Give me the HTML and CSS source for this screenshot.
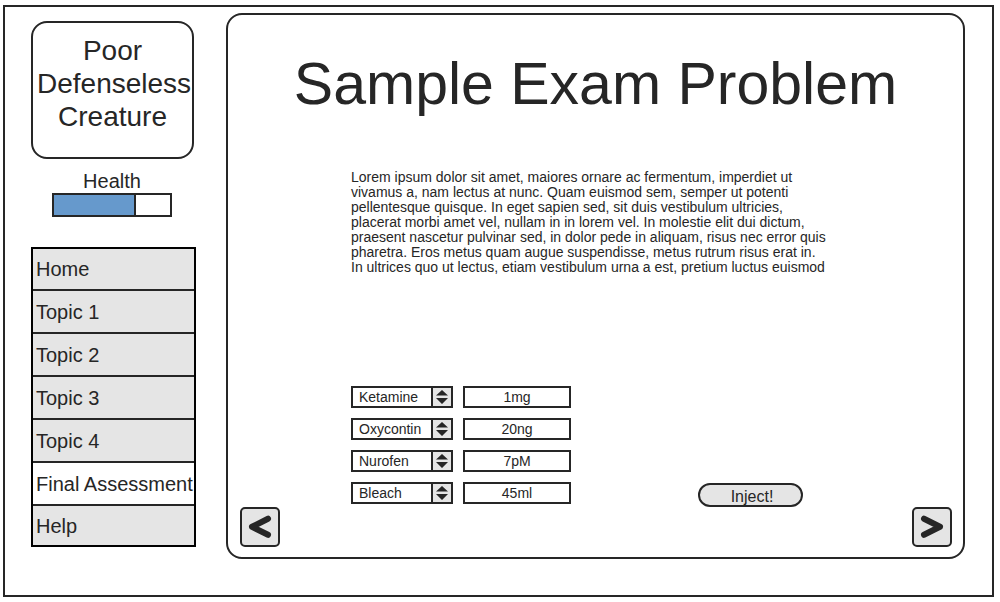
FILE: index.html
```html
<!DOCTYPE html>
<html lang="en">
<head>
<meta charset="utf-8">
<title>Sample Exam Problem</title>
<link rel="stylesheet" href="styles.css">
</head>
<body>
<div class="frame">
  <aside class="sidebar">
    <div class="creature">Poor Defenseless Creature</div>
    <div class="health">
      <label for="health">Health</label>
      <progress id="health" class="health-bar" value="71" max="100"></progress>
    </div>
    <nav class="menu">
      <a href="#home">Home</a>
      <a href="#topic1">Topic 1</a>
      <a href="#topic2">Topic 2</a>
      <a href="#topic3">Topic 3</a>
      <a href="#topic4">Topic 4</a>
      <a href="#final" class="current" aria-current="page">Final Assessment</a>
      <a href="#help">Help</a>
    </nav>
  </aside>
  <main class="panel">
    <h1 class="title">Sample Exam Problem</h1>
    <p class="question">Lorem ipsum dolor sit amet, maiores ornare ac fermentum, imperdiet ut<br>
      vivamus a, nam lectus at nunc. Quam euismod sem, semper ut potenti<br>
      pellentesque quisque. In eget sapien sed, sit duis vestibulum ultricies,<br>
      placerat morbi amet vel, nullam in in lorem vel. In molestie elit dui dictum,<br>
      praesent nascetur pulvinar sed, in dolor pede in aliquam, risus nec error quis<br>
      pharetra. Eros metus quam augue suspendisse, metus rutrum risus erat in.<br>
      In ultrices quo ut lectus, etiam vestibulum urna a est, pretium luctus euismod</p>
    <form class="doses">
      <div class="dose-grid">
        <div class="picker">
          <select aria-label="Drug 1"><option>Ketamine</option></select>
          <span class="arrows"><svg viewBox="0 0 18 18" width="18" height="18"><path d="M9 2l6 5.500H3zM9 16l6-6H3z"/></svg></span>
        </div>
        <input class="dose" type="text" value="1mg" aria-label="Dose 1">
        <div class="picker">
          <select aria-label="Drug 2"><option>Oxycontin</option></select>
          <span class="arrows"><svg viewBox="0 0 18 18" width="18" height="18"><path d="M9 2l6 5.500H3zM9 16l6-6H3z"/></svg></span>
        </div>
        <input class="dose" type="text" value="20ng" aria-label="Dose 2">
        <div class="picker">
          <select aria-label="Drug 3"><option>Nurofen</option></select>
          <span class="arrows"><svg viewBox="0 0 18 18" width="18" height="18"><path d="M9 2l6 5.500H3zM9 16l6-6H3z"/></svg></span>
        </div>
        <input class="dose" type="text" value="7pM" aria-label="Dose 3">
        <div class="picker">
          <select aria-label="Drug 4"><option>Bleach</option></select>
          <span class="arrows"><svg viewBox="0 0 18 18" width="18" height="18"><path d="M9 2l6 5.500H3zM9 16l6-6H3z"/></svg></span>
        </div>
        <input class="dose" type="text" value="45ml" aria-label="Dose 4">
      </div>
      <button type="button" class="inject">Inject!</button>
    </form>
    <div class="pager">
      <button type="button" class="step" aria-label="Previous"><svg viewBox="0 0 36 36" width="36" height="36"><path d="M26 9.700L10 17.800L26 25.800"/></svg></button>
      <button type="button" class="step" aria-label="Next"><svg viewBox="0 0 36 36" width="36" height="36"><path d="M10 9.700L26 17.800L10 25.800"/></svg></button>
    </div>
  </main>
</div>
</body>
</html>
```
FILE: styles.css
```css
* {
  box-sizing: border-box;
}

body {
  margin: 0;
  padding: 5px 6px 5px 3px;
  background: #fff;
  color: #262626;
  font-family: "Liberation Sans", Arial, sans-serif;
  font-size: 14px;
}

.frame {
  display: grid;
  grid-template-columns: 165px 1fr;
  gap: 30px;
  min-height: calc(100vh - 10px);
  padding: 6px 27px 36px 26px;
  border: 2px solid #262626;
}

.sidebar {
  display: flex;
  flex-direction: column;
  padding-top: 8px;
}

.creature {
  width: 163px;
  padding: 11px 4px 24px;
  border: 2px solid #262626;
  border-radius: 16px;
  font-size: 28px;
  line-height: 33px;
  text-align: center;
}

.health {
  display: flex;
  flex-direction: column;
  align-items: center;
  width: 162px;
  margin-top: 10px;
  font-size: 20px;
  line-height: 24px;
}

.health-bar {
  appearance: none;
  width: 120px;
  height: 24px;
  border: 2px solid #262626;
  background: #fff;
}

.health-bar::-webkit-progress-bar {
  background: #fff;
}

.health-bar::-webkit-progress-value {
  background: #6699cc;
  border-right: 2px solid #262626;
}

.menu {
  display: flex;
  flex-direction: column;
  margin-top: 30px;
  border: 2px solid #000;
}

.menu a {
  height: 43px;
  padding-left: 3px;
  border-bottom: 2px solid #262626;
  background: #e5e5e5;
  color: inherit;
  font-size: 20px;
  line-height: 42px;
  text-decoration: none;
  white-space: nowrap;
}

.menu a:first-child {
  height: 42px;
  line-height: 40px;
}

.menu a:last-child {
  height: 39px;
  border-bottom: 0;
  line-height: 40px;
}

.menu .current {
  background: #fff;
}

.panel {
  display: flex;
  flex-direction: column;
  padding: 36px 0 10px;
  border: 2px solid #262626;
  border-radius: 16px;
}

.title {
  margin: 0;
  font-size: 59px;
  font-weight: 400;
  line-height: 66px;
  text-align: center;
}

.question {
  margin: 53px 124px 0 123px;
  line-height: 15px;
}

.doses {
  display: flex;
  align-items: flex-end;
  justify-content: space-between;
  margin-top: auto;
  padding: 0 160px 0 123px;
}

.dose-grid {
  display: grid;
  grid-template-columns: 102px 108px;
  gap: 10px;
  padding-bottom: 3px;
}

.picker {
  position: relative;
  height: 22px;
}

.picker select {
  appearance: none;
  width: 100%;
  height: 22px;
  padding: 0 22px 0 6px;
  border: 2px solid #262626;
  border-radius: 0;
  background: #fff;
  color: inherit;
  font: inherit;
}

.arrows {
  position: absolute;
  top: 2px;
  right: 2px;
  width: 20px;
  height: 18px;
  border-left: 2px solid #262626;
  background: #e5e5e5;
  pointer-events: none;
}

.arrows svg {
  display: block;
  fill: #262626;
}

.dose {
  width: 100%;
  height: 22px;
  padding: 0;
  border: 2px solid #262626;
  background: #fff;
  color: inherit;
  font: inherit;
  text-align: center;
}

.inject {
  width: 105px;
  height: 24px;
  padding: 3px 0 0 3px;
  border: 2px solid #262626;
  border-radius: 12px;
  background: #e5e5e5;
  color: inherit;
  font-family: inherit;
  font-size: 16px;
  line-height: 18px;
}

.pager {
  display: flex;
  justify-content: space-between;
  padding: 0 11px 0 12px;
}

.step {
  width: 40px;
  height: 40px;
  padding: 0;
  border: 2px solid #262626;
  border-radius: 5px;
  background: #e5e5e5;
}

.step svg {
  display: block;
  fill: none;
  stroke: #262626;
  stroke-width: 6;
  stroke-linecap: round;
  stroke-linejoin: round;
}
```
